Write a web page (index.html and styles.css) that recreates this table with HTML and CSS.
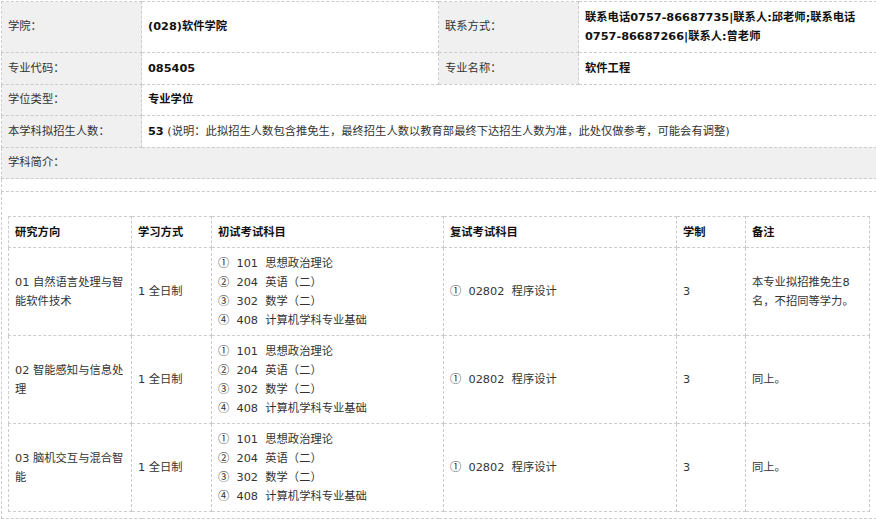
FILE: index.html
```html
<!DOCTYPE html>
<html lang="zh-CN">
<head>
<meta charset="utf-8">
<title>招生专业目录</title>
<link rel="stylesheet" href="styles.css">
</head>
<body>
<div class="page">
<table class="info">
  <colgroup>
    <col class="c-label"><col class="c-value"><col class="c-label"><col class="c-value-r">
  </colgroup>
  <tr>
    <td class="label">学院：</td>
    <td class="value strong">(028)软件学院</td>
    <td class="label">联系方式：</td>
    <td class="value strong">联系电话0757-86687735|联系人:邱老师;联系电话0757-86687266|联系人:曾老师</td>
  </tr>
  <tr>
    <td class="label">专业代码：</td>
    <td class="value strong">085405</td>
    <td class="label">专业名称：</td>
    <td class="value strong">软件工程</td>
  </tr>
  <tr>
    <td class="label">学位类型：</td>
    <td class="value strong" colspan="3">专业学位</td>
  </tr>
  <tr>
    <td class="label">本学科拟招生人数：</td>
    <td class="value" colspan="3"><strong>53</strong> (说明：此拟招生人数包含推免生，最终招生人数以教育部最终下达招生人数为准，此处仅做参考，可能会有调整)</td>
  </tr>
  <tr>
    <td class="label" colspan="4">学科简介：</td>
  </tr>
  <tr>
    <td class="intro" colspan="4"></td>
  </tr>
  <tr>
    <td class="detail" colspan="4">
      <table class="plan">
        <colgroup>
          <col class="p-dir"><col class="p-mode"><col class="p-exam"><col class="p-retest"><col class="p-years"><col class="p-note">
        </colgroup>
        <tr class="head">
          <th>研究方向</th><th>学习方式</th><th>初试考试科目</th><th>复试考试科目</th><th>学制</th><th>备注</th>
        </tr>
        <tr>
          <td>01 自然语言处理与智能软件技术</td>
          <td>1 全日制</td>
          <td>
            <div><span class="num">①</span>&nbsp;&nbsp;101&nbsp;&nbsp;思想政治理论</div>
            <div><span class="num">②</span>&nbsp;&nbsp;204&nbsp;&nbsp;英语（二）</div>
            <div><span class="num">③</span>&nbsp;&nbsp;302&nbsp;&nbsp;数学（二）</div>
            <div><span class="num">④</span>&nbsp;&nbsp;408&nbsp;&nbsp;计算机学科专业基础</div>
          </td>
          <td><span class="num">①</span>&nbsp;&nbsp;02802&nbsp;&nbsp;程序设计</td>
          <td>3</td>
          <td class="note">本专业拟招推免生8名，不招同等学力。</td>
        </tr>
        <tr>
          <td>02 智能感知与信息处理</td>
          <td>1 全日制</td>
          <td>
            <div><span class="num">①</span>&nbsp;&nbsp;101&nbsp;&nbsp;思想政治理论</div>
            <div><span class="num">②</span>&nbsp;&nbsp;204&nbsp;&nbsp;英语（二）</div>
            <div><span class="num">③</span>&nbsp;&nbsp;302&nbsp;&nbsp;数学（二）</div>
            <div><span class="num">④</span>&nbsp;&nbsp;408&nbsp;&nbsp;计算机学科专业基础</div>
          </td>
          <td><span class="num">①</span>&nbsp;&nbsp;02802&nbsp;&nbsp;程序设计</td>
          <td>3</td>
          <td class="note">同上。</td>
        </tr>
        <tr>
          <td>03 脑机交互与混合智能</td>
          <td>1 全日制</td>
          <td>
            <div><span class="num">①</span>&nbsp;&nbsp;101&nbsp;&nbsp;思想政治理论</div>
            <div><span class="num">②</span>&nbsp;&nbsp;204&nbsp;&nbsp;英语（二）</div>
            <div><span class="num">③</span>&nbsp;&nbsp;302&nbsp;&nbsp;数学（二）</div>
            <div><span class="num">④</span>&nbsp;&nbsp;408&nbsp;&nbsp;计算机学科专业基础</div>
          </td>
          <td><span class="num">①</span>&nbsp;&nbsp;02802&nbsp;&nbsp;程序设计</td>
          <td>3</td>
          <td class="note">同上。</td>
        </tr>
      </table>
    </td>
  </tr>
</table>
</div>
</body>
</html>
```
FILE: styles.css
```css
html, body {
  margin: 0;
  padding: 0;
  background: #fff;
}
body {
  font-family: "DejaVu Sans", "Noto Sans CJK SC", sans-serif;
  font-size: 11.3px;
  color: #333;
}
.page {
  padding: 1px 0 0 1px;
}
table {
  border-collapse: collapse;
  table-layout: fixed;
}
.info {
  width: 875px;
}
.c-label { width: 140px; }
.c-value { width: 297px; }
.c-value-r { width: 298px; }

.info td {
  border: 1px dashed #ccc;
  padding: 5.5px 6px;
  line-height: 19.5px;
  vertical-align: middle;
  text-align: left;
}
.info td.label {
  background: #f0f0f0;
}
.info td.strong,
.info strong {
  font-weight: bold;
  color: #111;
}
.info td.intro {
  padding: 6px;
  line-height: 0;
}
.info td.detail {
  padding: 24px 6px 6px 6px;
}

.plan {
  width: 861px;
}
.p-dir { width: 123px; }
.p-mode { width: 80px; }
.p-exam { width: 232px; }
.p-retest { width: 233px; }
.p-years { width: 69px; }
.p-note { width: 124px; }

.plan th,
.plan td {
  border: 1px dashed #ccc;
  padding: 5.5px 6px;
  line-height: 19px;
  vertical-align: middle;
  text-align: left;
}
.plan th {
  font-weight: bold;
  color: #111;
}
.plan td.note {
  padding-right: 10px;
}
.num {
  font-family: "Noto Sans CJK SC", sans-serif;
  line-height: 10px;
}
```
